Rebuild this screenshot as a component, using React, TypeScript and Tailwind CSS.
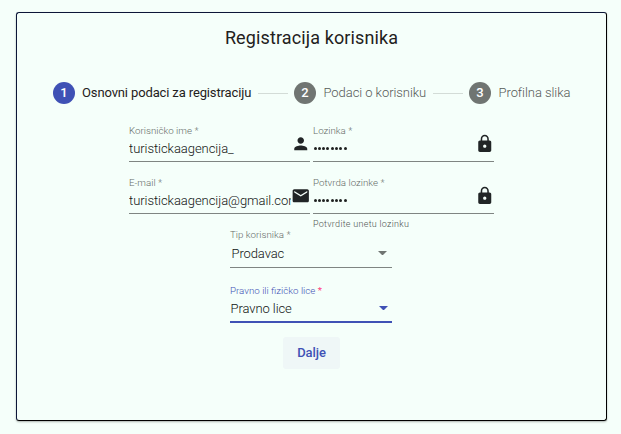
import type { ReactNode } from "react";

const PERSON = "M12 12c2.21 0 4-1.79 4-4s-1.79-4-4-4-4 1.79-4 4 1.79 4 4 4zm0 2c-2.67 0-8 1.34-8 4v2h16v-2c0-2.66-5.33-4-8-4z";
const MAIL = "M20 4H4c-1.1 0-1.99.9-1.99 2L2 18c0 1.1.9 2 2 2h16c1.1 0 2-.9 2-2V6c0-1.1-.9-2-2-2zm0 4l-8 5-8-5V6l8 5 8-5v2z";
const LOCK = "M18 8h-1V6c0-2.76-2.24-5-5-5S7 3.24 7 6v2H6c-1.1 0-2 .9-2 2v10c0 1.1.9 2 2 2h12c1.1 0 2-.9 2-2V10c0-1.1-.9-2-2-2zm-6 9c-1.1 0-2-.9-2-2s.9-2 2-2 2 .9 2 2-.9 2-2 2zm3.1-9H8.9V6c0-1.71 1.39-3.1 3.1-3.1 1.71 0 3.1 1.39 3.1 3.1v2z";

function Icon({ path }: { path: string }) {
  return (
    <svg viewBox="0 0 24 24" className="-mt-[10.5px] -ml-[0.5px] size-[19.5px] shrink-0 fill-[#212526]">
      <path d={path} />
    </svg>
  );
}

function Step({ n, active, className, children }: { n: number; active?: boolean; className: string; children: string }) {
  return (
    <div className={`flex h-[22px] shrink-0 items-center ${className}`}>
      <span className={`mr-[7px] flex size-[22px] shrink-0 items-center justify-center rounded-full text-[13px] font-medium text-white ${active ? "bg-[#3f51b5]" : "bg-[#707572]"}`}>
        {n}
      </span>
      <span className={`text-[13px] whitespace-nowrap ${active ? "font-normal tracking-[-0.13px] text-[#1f2120]" : "ml-[0.5px] font-light tracking-[-0.06px] text-[#555a57]"}`}>
        {children}
      </span>
    </div>
  );
}

function Field({ label, icon, children }: { label: string; icon: string; children: ReactNode }) {
  return (
    <div className="h-[37px] w-[181px] border-b border-[#7f8582]">
      <div className="h-3 text-[9.75px] leading-3 font-light text-[#666c69]">{label} *</div>
      <div className="flex h-6 items-center">
        <div className="h-5 w-[162px] shrink-0 overflow-hidden text-[13px] leading-5 font-light tracking-[-0.05px] whitespace-nowrap text-[#111312]">{children}</div>
        <Icon path={icon} />
      </div>
    </div>
  );
}

function Dots() {
  return (
    <div className="flex h-[18px] items-center gap-[1.3px] pl-[0.5px]">
      {Array.from({ length: 8 }, (_, i) => (
        <span key={i} className="size-[3px] rounded-full bg-[#1f2120]" />
      ))}
    </div>
  );
}

export default function App() {
  return (
    <div className="flex h-[434px] w-[621px] overflow-hidden bg-[#f5fffa] pt-3 pl-4 font-['Roboto','Liberation_Sans',sans-serif]">
      <main className="flex h-[409px] w-[591px] flex-col items-center rounded-[3px] border border-t-[#0c1638] border-r-black border-b-black border-l-[#0c1638] shadow-[0_1px_2px_rgba(0,0,0,0.3)]">
        <h1 className="mt-[13px] h-6 text-[18px] leading-6 font-normal tracking-[0.12px] text-[#1f2120]">Registracija korisnika</h1>
        <div className="mt-8 flex w-[517px] items-center">
          <Step n={1} active className="w-[199px]">Osnovni podaci za registraciju</Step>
          <span className="mx-[6px] h-px w-[30px] bg-[#d3dcd7]" />
          <Step n={2} className="w-[133px]">Podaci o korisniku</Step>
          <span className="mx-[6px] h-px w-[30px] bg-[#d3dcd7]" />
          <Step n={3} className="w-[101px]">Profilna slika</Step>
        </div>
        <div className="mt-[21px] grid w-[365px] grid-cols-[181px_181px] gap-x-[3px] gap-y-[15px]">
          <Field label="Korisničko ime" icon={PERSON}>turistickaagencija_</Field>
          <Field label="Lozinka" icon={LOCK}><Dots /></Field>
          <Field label="E-mail" icon={MAIL}>turistickaagencija@gmail.com</Field>
          <Field label="Potvrda lozinke" icon={LOCK}><Dots /></Field>
        </div>
        <div className="flex h-[15px] w-[365px] justify-end">
          <span className="mt-1 w-[181px] text-[9px] leading-3 font-light tracking-[0.28px] text-[#4f5552]">Potvrdite unetu lozinku</span>
        </div>
        <div className="mr-px h-[39px] w-[162px] border-b border-[#7f8582]">
          <div className="h-3 text-[9.75px] leading-3 font-light text-[#666c69]">Tip korisnika *</div>
          <div className="flex h-[26px] items-center justify-between pr-[5px] pl-[1.5px]">
            <span className="text-[13px] font-light tracking-[-0.1px] text-[#111312]">Prodavac</span>
            <svg viewBox="0 0 10 5" className="-mt-[2px] h-[4.5px] w-[9px] fill-[#707572]"><path d="M0 0h10L5 5z" /></svg>
          </div>
        </div>
        <div className="mt-[17px] mr-px h-[38px] w-[162px] border-b-2 border-[#3f51b5]">
          <div className="h-3 text-[9.75px] leading-3 font-light text-[#3f51b5]">Pravno ili fizičko lice <span className="font-normal text-[#ff4081]">*</span></div>
          <div className="flex h-6 items-center justify-between pr-1 pl-[0.5px]">
            <span className="text-[13px] font-light tracking-[-0.08px] text-[#111312]">Pravno lice</span>
            <svg viewBox="0 0 10 5" className="-mt-[2px] h-[4.5px] w-[9px] fill-[#3f51b5]"><path d="M0 0h10L5 5z" /></svg>
          </div>
        </div>
        <button className="mt-[14px] h-8 w-[57px] rounded-[3px] bg-[#eff7f7] text-[13px] font-medium tracking-[-0.1px] text-[#3f51b5]">Dalje</button>
      </main>
    </div>
  );
}
